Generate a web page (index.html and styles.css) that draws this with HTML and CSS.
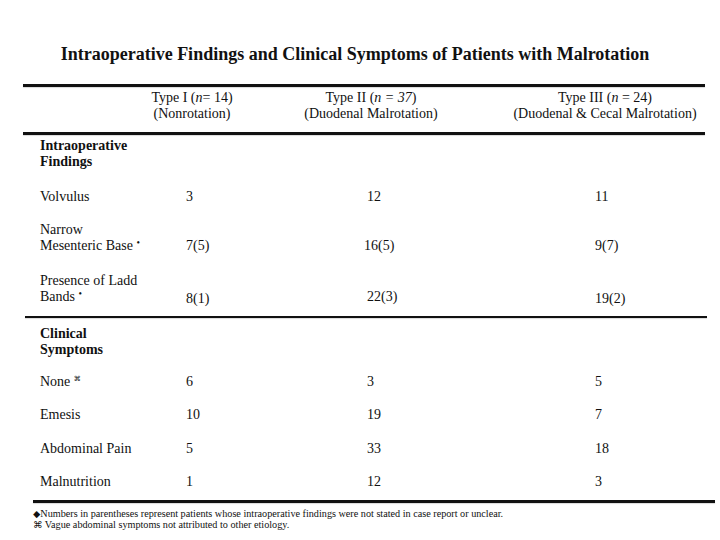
FILE: index.html
```html
<!DOCTYPE html>
<html>
<head>
<meta charset="utf-8">
<link rel="stylesheet" href="styles.css">
</head>
<body>
<div class="page">
  <h1 class="title">Intraoperative Findings and Clinical Symptoms of Patients with Malrotation</h1>
  <div class="rule rule-thick rule-a"></div>
  <div class="head">
    <div class="hcell">Type I (<i>n</i>= 14)<br>(Nonrotation)</div>
    <div class="hcell">Type II (<i>n = 37</i>)<br>(Duodenal Malrotation)</div>
    <div class="hcell">Type III (<i>n</i> = 24)<br>(Duodenal &amp; Cecal Malrotation)</div>
  </div>
  <div class="rule rule-thick rule-a"></div>

  <div class="section s1">
    <div class="row sechead">Intraoperative<br>Findings</div>
    <div class="row r-volvulus">
      <div class="lab">Volvulus</div><div>3</div><div>12</div><div>11</div>
    </div>
    <div class="row r-narrow">
      <div class="lab">Narrow<br>Mesenteric Base <sup class="mark">&#8226;</sup></div>
      <div class="val">7(5)</div><div class="val shift-l">16(5)</div><div class="val">9(7)</div>
    </div>
    <div class="row r-presence">
      <div class="lab">Presence of Ladd<br>Bands <sup class="mark">&#8226;</sup></div>
      <div class="val low">8(1)</div><div class="val">22(3)</div><div class="val low">19(2)</div>
    </div>
  </div>
  <div class="rule rule-mid"></div>

  <div class="section s2">
    <div class="row sechead">Clinical<br>Symptoms</div>
    <div class="row r-none">
      <div class="lab">None <sup class="mark cmd">&#8984;</sup></div><div>6</div><div>3</div><div>5</div>
    </div>
    <div class="row r-emesis">
      <div class="lab">Emesis</div><div>10</div><div>19</div><div>7</div>
    </div>
    <div class="row r-abd">
      <div class="lab">Abdominal Pain</div><div>5</div><div>33</div><div>18</div>
    </div>
    <div class="row r-maln">
      <div class="lab">Malnutrition</div><div>1</div><div>12</div><div>3</div>
    </div>
  </div>
  <div class="rule rule-thick rule-b"></div>

  <div class="notes">
    <p><span class="dia">&#9670;</span>Numbers in parentheses represent patients whose intraoperative findings were not stated in case report or unclear.</p>
    <p><span class="cmd">&#8984;</span> Vague abdominal symptoms not attributed to other etiology.</p>
  </div>
</div>
</body>
</html>
```

FILE: styles.css
```css
html, body {
  margin: 0;
  padding: 0;
  background: #ffffff;
}

body {
  font-family: "Liberation Serif", "Times New Roman", "DejaVu Serif", serif;
  color: #111;
  width: 720px;
  height: 540px;
  overflow: hidden;
}

.page {
  width: 720px;
}

.title {
  margin: 0;
  padding-top: 43px;
  height: 84px;
  box-sizing: border-box;
  font-size: 18px;
  line-height: 22px;
  font-weight: bold;
  text-align: center;
  padding-right: 10px;
  white-space: nowrap;
}

.rule {
  background: #111;
}

.rule-thick {
  height: 3px;
}

.rule-a {
  margin-left: 23px;
  width: 682px;
  box-shadow: 0 1px 1px rgba(0,0,0,0.15);
}

.rule-mid {
  margin-left: 25px;
  width: 682px;
  height: 2px;
  box-shadow: 0 1px 1px rgba(0,0,0,0.15);
}

.rule-b {
  margin-left: 33px;
  width: 682px;
  box-shadow: 0 1px 1px rgba(0,0,0,0.15);
}

.head {
  display: grid;
  grid-template-columns: 100px 140px 210px;
  column-gap: 59px;
  padding-left: 142px;
  padding-top: 3px;
  padding-bottom: 10px;
  font-size: 14px;
  line-height: 16px;
}

.hcell {
  text-align: center;
  white-space: nowrap;
}

.section {
  font-size: 14px;
  line-height: 16px;
  padding-left: 40px;
}

.s1 {
  padding-top: 3px;
  padding-bottom: 11px;
}

.s2 {
  padding-top: 8px;
  padding-bottom: 10px;
}

.row {
  display: grid;
  grid-template-columns: 146px 181px 228px 1fr;
  align-items: end;
}

.sechead {
  display: block;
  font-weight: bold;
}

.r-volvulus { margin-top: 19px; }
.r-narrow { margin-top: 17px; }
.r-presence { margin-top: 19px; }
.r-none { margin-top: 16px; }
.r-emesis { margin-top: 17px; }
.r-abd { margin-top: 18px; }
.r-maln { margin-top: 17px; }

.lab {
  white-space: nowrap;
}

.val.low {
  position: relative;
  top: 2px;
}

.val.shift-l {
  margin-left: -3px;
}

.mark {
  font-size: 10px;
  line-height: 0;
  vertical-align: 4px;
}

.cmd {
  font-family: "DejaVu Sans", sans-serif;
}

.mark.cmd {
  font-size: 7px;
  vertical-align: 5px;
}

.notes {
  padding-left: 33px;
  padding-top: 5px;
  font-size: 10.2px;
  line-height: 11px;
}

.notes p {
  margin: 0;
  white-space: nowrap;
}

.notes .cmd {
  font-size: 9.5px;
}

.dia {
  font-family: "DejaVu Sans", sans-serif;
  font-size: 9.5px;
}
```
